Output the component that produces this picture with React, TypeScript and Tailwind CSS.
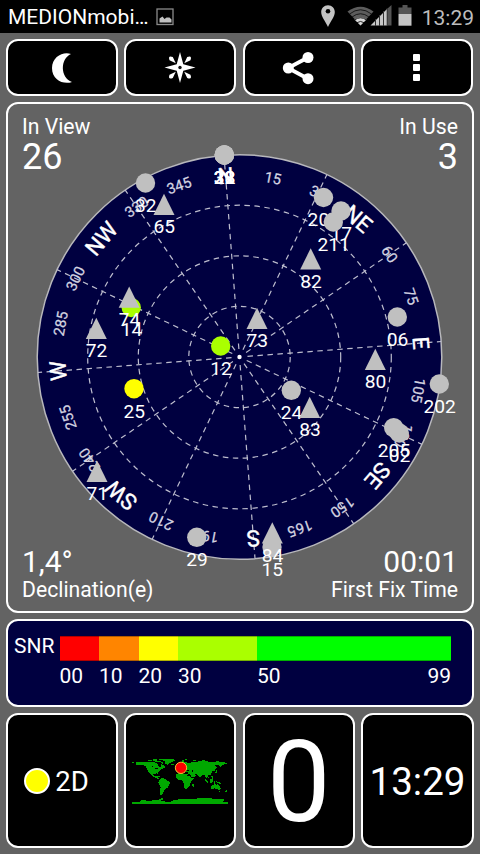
import React from "react";

const CX = 239.5;
const CY = 357;
const RADIUS = 202.3;
const HEADING = -4.4;

type Satellite = {
  id: string;
  x: number;
  y: number;
  shape?: "triangle";
  fill?: string;
};

const satellites: Satellite[] = [
  { id: "28", x: 224.3, y: 155 },
  { id: "32", x: 224.3, y: 155 },
  { id: "22", x: 224.3, y: 155 },
  { id: "38", x: 224.3, y: 155 },
  { id: "32", x: 145.5, y: 183 },
  { id: "65", x: 164, y: 204.5, shape: "triangle" },
  { id: "208", x: 323.5, y: 197.5 },
  { id: "17", x: 341, y: 211 },
  { id: "211", x: 333.3, y: 222 },
  { id: "82", x: 310.7, y: 259, shape: "triangle" },
  { id: "73", x: 257, y: 318.5, shape: "triangle" },
  { id: "06", x: 397.3, y: 317 },
  { id: "80", x: 375.3, y: 359.5, shape: "triangle" },
  { id: "202", x: 439.3, y: 384 },
  { id: "24", x: 291.3, y: 390.3 },
  { id: "83", x: 309.7, y: 407.5, shape: "triangle" },
  { id: "205", x: 393.7, y: 427.7 },
  { id: "02", x: 399.3, y: 433 },
  { id: "14", x: 131.2, y: 307.5, fill: "#aaff00" },
  { id: "74", x: 129.2, y: 297.3, shape: "triangle" },
  { id: "72", x: 96.3, y: 328.5, shape: "triangle" },
  { id: "12", x: 220.7, y: 346, fill: "#aaff00" },
  { id: "25", x: 134, y: 388.7, fill: "#ffff00" },
  { id: "71", x: 97, y: 471.5, shape: "triangle" },
  { id: "29", x: 196.8, y: 537.3 },
  { id: "15", x: 272, y: 547 },
  { id: "84", x: 272.3, y: 533, shape: "triangle" },
];

const cardinal: Record<number, string> = {
  0: "N", 45: "NE", 90: "E", 135: "SE", 180: "S", 225: "SW", 270: "W", 315: "NW",
};

const bearings = Array.from({ length: 24 }, (_, i) => i * 15);
const spokes = Array.from({ length: 12 }, (_, i) => i * 30);

function SkyPlot() {
  return (
    <svg viewBox="8 104 464 507" className="col-start-1 row-start-1 h-[507px] w-[464px] overflow-visible">
      <circle cx={CX} cy={CY} r={RADIUS} fill="#000040" stroke="#b8b8bc" strokeWidth="1.5" />
      <g fill="none" stroke="#bdbdce" strokeWidth="1.2" strokeDasharray="5.5 4.5">
        {[50.7, 101.2, 151.8].map((r) => (
          <circle key={r} cx={CX} cy={CY} r={r} />
        ))}
        {spokes.map((a) => (
          <line key={a} x1={CX} y1={CY - 8} x2={CX} y2={CY - RADIUS} transform={`rotate(${a + HEADING} ${CX} ${CY})`} />
        ))}
      </g>
      <circle cx={CX} cy={CY} r="2.2" fill="#fff" />
      {bearings.map((a) => (
        <text
          key={a}
          x={CX}
          y={CY - 182 + (cardinal[a] ? 8 : 5.3)}
          textAnchor="middle"
          fontSize={cardinal[a] ? 22.5 : 14.8}
          fill={cardinal[a] ? "#fff" : "#d4d4e0"}
          stroke={cardinal[a] ? "#fff" : "#d4d4e0"}
          strokeWidth={cardinal[a] ? 0.4 : 0.25}
          transform={`rotate(${a + HEADING} ${CX} ${CY})`}
        >
          {cardinal[a] ?? a}
        </text>
      ))}
      {satellites.map((s, i) => (
        <g key={i}>
          {s.shape === "triangle" ? (
            <path d={`M${s.x} ${s.y - 10.8}l10.5 21.3h-21z`} fill="#c0c0c0" />
          ) : (
            <circle cx={s.x} cy={s.y} r="9.7" fill={s.fill ?? "#c0c0c0"} />
          )}
          <text x={s.x + 0.3} y={s.y + 28.9} textAnchor="middle" fontSize="19.2" fill="#fff">
            {s.id}
          </text>
        </g>
      ))}
    </svg>
  );
}

function StatusBar() {
  return (
    <header className="flex h-[33px] items-center bg-black pl-2 pr-[7px] text-[21px] leading-none">
      <span className="pt-px tracking-[0px]">MEDIONmobi…</span>
      <svg width="18" height="18" viewBox="0 0 18 18" className="ml-[7px]">
        <rect x="1" y="1" width="16" height="15.500" fill="none" stroke="#8a8a8a" strokeWidth="1.300" />
        <path d="M3.500 14.500v-4l3-2 2 2.500 2-1.500h3l2 2v3z" fill="#c0c0c0" />
      </svg>
      <svg width="94" height="26" viewBox="318 4 94 26" className="ml-auto">
        <path d="M327 5.200c4 0 6.800 3 6.800 6.800 0 4.500-4 9-6.800 15-2.800-6-6.800-10.500-6.800-15 0-3.800 2.800-6.800 6.800-6.800z" fill="#c4c4c4" />
        <circle cx="327" cy="11.300" r="2.300" fill="#000" />
        <path d="M346.500 11.500Q359.500 2 372.500 11.500L359.500 25.500z" fill="#5c5c5c" />
        <path d="M353.500 19.500q6-4.500 12 0l-6 6z" fill="#d8d8d8" />
        <g fill="none" stroke="#111" strokeWidth="0.900">
          <path d="M348.500 14q11-8.500 22 0M351 17q8.500-6.500 17 0M353.500 20q6-4.500 12 0M356 22.700q3.500-2.500 7 0" />
        </g>
        <path d="M369.500 25.500L386 9v16.500z" fill="#c8c8c8" />
        <path d="M386 9l4.500-4v20.500H386z" fill="#555" />
        <path d="M374.500 19v7M378.500 15v11M382.500 11v15M386.200 8v18" stroke="#333" />
        <path d="M401.500 5h5v2.500h4V14h-13V7.500h4z" fill="#555" />
        <path d="M397.500 14h13v11.700h-13z" fill="#c4c4c4" />
      </svg>
      <span className="ml-[9px] -mr-px pt-[3px] text-[#bdbdbd]">13:29</span>
    </header>
  );
}

function MoonIcon() {
  return (
    <svg width="34" height="34" viewBox="45 50.500 34 34">
      <path d="M71 53.500C64 50.500 52 55.500 52 67.500S63.500 84.500 72 81.500C60 77 60 58.500 71 53.500z" fill="#fff" />
    </svg>
  );
}

function StarIcon() {
  return (
    <svg width="34" height="34" viewBox="-17 -16.500 34 34">
      <path d="M0-15.500L3.300-3.300 15.500 0 3.300 3.300 0 15.500-3.300 3.300-15.500 0-3.300-3.300z" fill="#fff" />
      {[45, 135, 225, 315].map((a) => (
        <path key={a} d="M0-6L2.300-12.500Q0-17.500-2.300-12.500z" fill="#fff" transform={`rotate(${a})`} />
      ))}
      <circle r="1.700" fill="#111" />
    </svg>
  );
}

function ShareIcon() {
  return (
    <svg width="34" height="34" viewBox="281 50.500 34 34">
      <path d="M307 57L287 67.500l20 10.700" fill="none" stroke="#fff" strokeWidth="3.800" />
      <circle cx="287.300" cy="67.500" r="5.500" fill="#fff" />
      <circle cx="307" cy="57" r="5.500" fill="#fff" />
      <circle cx="307" cy="78.200" r="5.500" fill="#fff" />
    </svg>
  );
}

function MoreIcon() {
  return (
    <div className="flex flex-col gap-[3px]">
      <i className="size-[7px] rounded-[1px] bg-white" />
      <i className="size-[7px] rounded-[1px] bg-white" />
      <i className="size-[7px] rounded-[1px] bg-white" />
    </div>
  );
}

function WorldMap() {
  return (
    <svg width="96" height="46" viewBox="0 0 288 138" shapeRendering="crispEdges" className="overflow-visible">
      <g fill="#00a800">
        <path d="M12 13H44L52 11 68 13 78 18 80 26 86 26 86 18 94 22 100 28 92 32 84 36 80 42 78 48 74 46 64 48 66 54 74 54 78 60 84 61 78 63 66 57 56 50 50 42 45 34 42 25 34 21 24 22 12 20z" />
        <path d="M0 12h5v4H0zM48 5h12v4H48zM64 3h10v5H64zM70 9h16v4H70zM80 3h12v4H80zM84 12l8 1 4 6-6-1z" />
        <path d="M90 5L98 2H126L128 8 118 13 110 16 106 21 100 17 98 10zM118 17h9v4h-9z" />
        <path d="M74 54h9v2h-9zM84 62L92 60 100 63 104 68 115 73 112 80 108 88 100 94 95 100 92 108 90 112 85 110 84 100 86 88 82 80 79 73z" />
        <path d="M132 49L140 45 152 45 156 48 168 48 173 54 178 61 186 60 182 67 176 73 175 80 170 87 163 94 158 92 156 82 154 72 150 66 138 65 132 58zM181 77h5v8l-4 3z" />
        <path d="M132 42L134 36 144 34 134 29 144 25 145 18 152 13 164 12 168 16 184 12 196 13 202 8 216 7 228 11 244 13 272 13 288 14 284 18 270 21 264 28 260 20 248 22 254 28 250 34 246 40 242 36 240 43 236 50 228 51 230 59 226 57 226 64 220 58 218 50 210 50 204 61 198 50 188 47 192 53 186 58 180 58 174 49 168 46 168 41 158 40 158 44 150 38 142 40 140 44z" />
        <path d="M149 7h8v4h-8zM158 4h8v3h-8zM184 6h9v4h-9zM253 8h8v3h-8zM132 24h4v8h-4zM252 37h4v8h-6z" />
        <path d="M220 63l10 8-3 4-9-9zM234 65l8-4 3 8-6 7-6-4zM246 69l5 2-3 7-3-2zM238 53h5v8h-4zM252 70l10 2 6 5-12-1zM226 77h16v2h-16z" />
        <path d="M236 85L244 80 251 79 253 82 257 77 262 84 267 91 263 96 255 94 249 91 239 93zM260 98h4v3h-4zM282 96h4v5h-7z" />
        <path d="M0 133L24 132 28 127 52 128 66 127 78 127 92 119 94 123 86 128 100 131 117 131 126 126 144 124 178 123 192 122 208 120 228 121 252 122 277 123 276 128 270 132 288 133V138H0z" />
      </g>
      <path d="M60 24h3v3h-3zM70 29h7v4h-7zM162 36h8v3h-8zM180 36h4v6h-4zM164 51h10v2h-10z" fill="#000" />
      <circle cx="147" cy="29.500" r="17" fill="#ff0000" stroke="#f5b932" strokeWidth="3" shapeRendering="auto" />
    </svg>
  );
}

function ActionButton({ children }: { children: React.ReactNode }) {
  return (
    <button className="flex h-[57px] items-center justify-center rounded-[12px] border-2 border-white bg-black">
      {children}
    </button>
  );
}

function Tile({ children }: { children: React.ReactNode }) {
  return (
    <div className="flex h-[135px] items-center justify-center overflow-hidden rounded-[12px] border-2 border-white bg-black">
      {children}
    </div>
  );
}

const snr = [
  { label: "00", bar: "w-[39.500px] bg-[#ff0000]" },
  { label: "10", bar: "w-[40px] bg-[#ff8500]" },
  { label: "20", bar: "w-[39px] bg-[#ffff00]" },
  { label: "30", bar: "w-[79px] bg-[#aaff00]" },
  { label: "50", bar: "flex-1 bg-[#00ff00]" },
];

export default function App() {
  return (
    <div className="h-[854px] w-[480px] overflow-hidden bg-[#636363] font-['Roboto',sans-serif] text-white">
      <StatusBar />
      <main className="flex flex-col gap-1.5 px-1.5 pt-1.5">
        <nav className="mr-px grid grid-cols-[112px_112px_112px_112px] justify-between">
          <ActionButton><MoonIcon /></ActionButton>
          <ActionButton><StarIcon /></ActionButton>
          <ActionButton><ShareIcon /></ActionButton>
          <ActionButton><MoreIcon /></ActionButton>
        </nav>

        <section className="grid h-[511px] rounded-[12px] border-2 border-white">
          <SkyPlot />
          <div className="col-start-1 row-start-1 flex flex-col justify-between px-3.5 pb-[9px] pt-[11px] text-[21.200px] leading-6">
            <div className="flex justify-between">
              <div>
                <div>In View</div>
                <div className="text-[36px] leading-9">26</div>
              </div>
              <div className="text-right">
                <div>In Use</div>
                <div className="text-[36px] leading-9">3</div>
              </div>
            </div>
            <div className="flex justify-between">
              <div>
                <div className="text-[30px] leading-8">1,4°</div>
                <div>Declination(e)</div>
              </div>
              <div className="text-right">
                <div className="text-[30px] leading-8">00:01</div>
                <div>First Fix Time</div>
              </div>
            </div>
          </div>
        </section>

        <section className="flex h-[88px] gap-[3px] rounded-[12px] border-2 border-white bg-[#000040] pl-1.5 pr-[21px] pt-[15px] text-[21px] leading-6">
          <span className="-mt-0.5 w-[42.500px]">SNR</span>
          <div className="flex-1">
            <div className="flex">
              {snr.map((band) => (
                <div key={band.label} className={band.bar + " h-[25px] border-y border-black/30"} />
              ))}
            </div>
            <div className="mt-[3px] flex">
              <span className="w-[39.500px]">00</span>
              <span className="w-[39.500px]">10</span>
              <span className="w-[39.500px]">20</span>
              <span className="w-[79px]">30</span>
              <span>50</span>
              <span className="ml-auto">99</span>
            </div>
          </div>
        </section>

        <section className="grid grid-cols-[112px_112px_112px_113px] justify-between">
          <Tile>
            <div className="mr-[11px] flex items-center gap-[5px]">
              <i className="size-[26px] rounded-full border-2 border-white bg-[#ffff00]" />
              <span className="pt-0.5 text-[27.500px] leading-none">2D</span>
            </div>
          </Tile>
          <Tile><WorldMap /></Tile>
          <Tile><span className="pt-[3px] text-[113px] leading-none">0</span></Tile>
          <Tile><span className="pt-[3px] text-[38.500px] leading-none">13:29</span></Tile>
        </section>
      </main>
    </div>
  );
}
